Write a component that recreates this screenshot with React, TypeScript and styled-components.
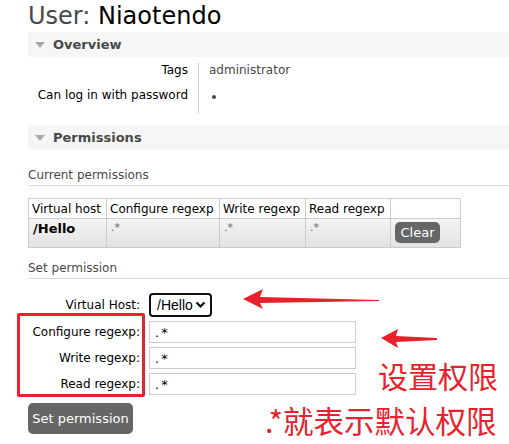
import React from "react";
import styled, { createGlobalStyle } from "styled-components";

const Global = createGlobalStyle`
  html, body { margin: 0; padding: 0; background: #fff; }
  body { font-family: "DejaVu Sans", Verdana, sans-serif; font-size: 12px; color: #484848; }
`;

const Page = styled.div`
  position: relative;
  width: 509px;
  height: 444px;
  overflow: hidden;
  padding-left: 28px;
  box-sizing: border-box;
`;

const Title = styled.h1`
  margin: 0;
  padding-top: 2px;
  font-size: 24px;
  line-height: 28px;
  font-weight: normal;
  color: #484848;
  b { font-weight: normal; color: #000; }
`;

const SectionHeader = styled.div<{ $top: number }>`
  margin-top: ${(p) => p.$top}px;
  height: 25px;
  background: #f6f6f6;
  display: flex;
  align-items: center;
  padding-left: 7px;
  font-weight: bold;
  font-size: 13px;
  color: #484848;
`;

const Tri = styled.span`
  width: 0;
  height: 0;
  border-left: 5px solid transparent;
  border-right: 5px solid transparent;
  border-top: 6px solid #aaa;
  margin-right: 8px;
`;

const Facts = styled.div`
  margin-top: 6px;
  display: grid;
  grid-template-columns: 171px 1fr;
`;

const FactLabel = styled.div`
  height: 25px;
  box-sizing: border-box;
  line-height: 15px;
  text-align: right;
  padding-right: 10px;
  color: #000;
  border-right: 1px solid #ccc;
`;

const FactValue = styled.div`
  height: 25px;
  line-height: 15px;
  padding-left: 10px;
  color: #484848;
`;

const Dot = styled.span`
  display: inline-block;
  width: 4px;
  height: 4px;
  border-radius: 50%;
  background: #484848;
  margin-left: 3px;
  margin-top: 2px;
  vertical-align: middle;
`;

const SubHeading = styled.h3<{ $top: number }>`
  margin: ${(p) => p.$top}px 0 0 0;
  font-size: 12px;
  font-weight: normal;
  line-height: 18px;
  color: #484848;
  border-bottom: 1px solid #ddd;
  padding-bottom: 1px;
`;

const Table = styled.table`
  margin-top: 12px;
  border-collapse: collapse;
  table-layout: fixed;
  width: 432px;
  font-size: 12px;
  color: #000;
`;

const Th = styled.th<{ $w: number }>`
  width: ${(p) => p.$w}px;
  height: 20px;
  box-sizing: border-box;
  border: 1px solid #ccc;
  font-weight: normal;
  text-align: left;
  padding: 0 3px;
  white-space: nowrap;
  overflow: hidden;
  background: #fff;
`;

const Tr = styled.tr`
  background: linear-gradient(#f4f4f4, #e2e2e2);
`;

const Td = styled.td<{ $bold?: boolean }>`
  height: 29px;
  box-sizing: border-box;
  border: 1px solid #ccc;
  vertical-align: top;
  padding: 2px 4px 0;
  font-weight: ${(p) => (p.$bold ? "bold" : "normal")};
  font-size: ${(p) => (p.$bold ? "13px" : "11px")};
  color: ${(p) => (p.$bold ? "#000" : "#666")};
`;

const Button = styled.button<{ $small?: boolean }>`
  font-family: "DejaVu Sans", Verdana, sans-serif;
  border: none;
  border-radius: 5px;
  background: #666;
  color: #fff;
  font-size: 13px;
  padding: 0;
  width: ${(p) => (p.$small ? 45 : 105)}px;
  height: ${(p) => (p.$small ? 21 : 31)}px;
  margin-top: ${(p) => (p.$small ? 1 : 0)}px;
`;

const Form = styled.div`
  margin-top: 14px;
  display: grid;
  grid-template-columns: 112px 207px;
  column-gap: 9px;
  row-gap: 4px;
  align-items: center;
`;

const FormLabel = styled.label`
  text-align: right;
  color: #000;
  font-size: 12px;
  white-space: nowrap;
`;

const Select = styled.div`
  width: 63px;
  height: 24px;
  box-sizing: border-box;
  border: 2px solid #111;
  border-radius: 4px;
  display: flex;
  align-items: center;
  justify-content: space-between;
  padding: 0 4px 0 6px;
  font-family: "Liberation Sans", Arial, sans-serif;
  font-size: 14px;
  color: #000;
`;

const Input = styled.div`
  height: 22px;
  box-sizing: border-box;
  border: 1px solid #ccc;
  display: flex;
  align-items: center;
  padding-left: 5px;
  font-size: 13px;
  color: #000;
  letter-spacing: 2px;
`;

const Submit = styled.div`
  margin-top: 8px;
`;

const RedBox = styled.div`
  position: absolute;
  left: 17px;
  top: 313px;
  width: 128px;
  height: 84px;
  box-sizing: border-box;
  border: 3px solid #e8222c;
  border-radius: 2px;
`;

const Arrow = styled.svg<{ $l: number; $t: number }>`
  position: absolute;
  left: ${(p) => p.$l}px;
  top: ${(p) => p.$t}px;
`;

const Note = styled.div<{ $l: number; $t: number; $s: number }>`
  position: absolute;
  left: ${(p) => p.$l}px;
  top: ${(p) => p.$t}px;
  font-family: "Noto Sans CJK SC", "Liberation Sans", sans-serif;
  font-size: ${(p) => p.$s}px;
  line-height: 1;
  color: #e8222c;
  white-space: nowrap;
`;

export default function App() {
  return (
    <>
      <Global />
      <Page>
        <Title>
          User: <b>Niaotendo</b>
        </Title>
        <SectionHeader $top={2}>
          <Tri />
          Overview
        </SectionHeader>
        <Facts>
          <FactLabel>Tags</FactLabel>
          <FactValue>administrator</FactValue>
          <FactLabel>Can log in with password</FactLabel>
          <FactValue>
            <Dot />
          </FactValue>
        </Facts>
        <SectionHeader $top={12}>
          <Tri />
          Permissions
        </SectionHeader>
        <SubHeading $top={16}>Current permissions</SubHeading>
        <Table>
          <thead>
            <tr>
              <Th $w={78}>Virtual host</Th>
              <Th $w={113}>Configure regexp</Th>
              <Th $w={86}>Write regexp</Th>
              <Th $w={85}>Read regexp</Th>
              <Th $w={70}></Th>
            </tr>
          </thead>
          <tbody>
            <Tr>
              <Td $bold>/Hello</Td>
              <Td>.*</Td>
              <Td>.*</Td>
              <Td>.*</Td>
              <Td>
                <Button $small>Clear</Button>
              </Td>
            </Tr>
          </tbody>
        </Table>
        <SubHeading $top={11}>Set permission</SubHeading>
        <Form>
          <FormLabel>Virtual Host:</FormLabel>
          <div>
            <Select>
              /Hello
              <svg width="11" height="8" viewBox="0 0 11 8">
                <path d="M1.5 1.5 L5.5 5.5 L9.5 1.5" stroke="#000" strokeWidth="2.2" fill="none" />
              </svg>
            </Select>
          </div>
          <FormLabel>Configure regexp:</FormLabel>
          <Input>.*</Input>
          <FormLabel>Write regexp:</FormLabel>
          <Input>.*</Input>
          <FormLabel>Read regexp:</FormLabel>
          <Input>.*</Input>
        </Form>
        <Submit>
          <Button>Set permission</Button>
        </Submit>

        <RedBox />
        <Arrow $l={242} $t={288} width="140" height="22" viewBox="0 0 140 22">
          <path d="M1 11 L21 1 L18 9 L137 12 L137 13 L18 15 L21 21 Z" fill="#e8222c" />
        </Arrow>
        <Arrow $l={380} $t={328} width="60" height="22" viewBox="0 0 60 22">
          <path d="M1 10 L18 1 L16 8 L57 10 L57 12 L16 14 L18 20 Z" fill="#e8222c" />
        </Arrow>
        <Note $l={378} $t={360} $s={30}>设置权限</Note>
        <Note $l={265} $t={405} $s={30.5}>.*就表示默认权限</Note>
      </Page>
    </>
  );
}
